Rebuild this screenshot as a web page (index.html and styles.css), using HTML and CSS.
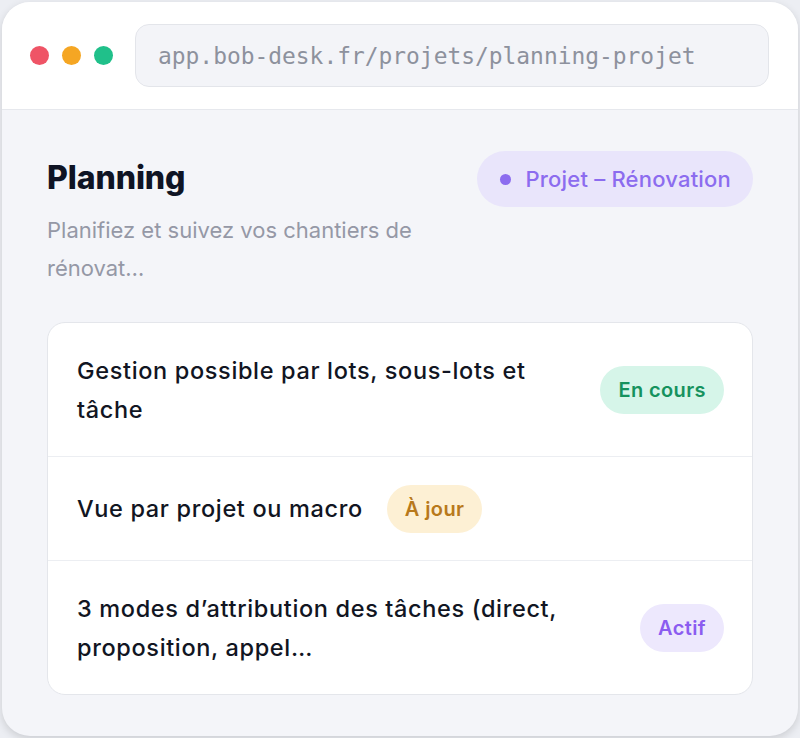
FILE: index.html
```html
<!DOCTYPE html>
<html lang="fr">
<head>
<meta charset="utf-8">
<title>Planning</title>
<link rel="stylesheet" href="styles.css">
</head>
<body>
<div class="window">
  <header class="titlebar">
    <div class="dots">
      <span class="dot dot-red"></span>
      <span class="dot dot-orange"></span>
      <span class="dot dot-green"></span>
    </div>
    <div class="url">app.bob-desk.fr/projets/planning-projet</div>
  </header>
  <main class="content">
    <div class="head">
      <div class="head-text">
        <h1 class="title">Planning</h1>
        <p class="subtitle">Planifiez et suivez vos chantiers de rénovat…</p>
      </div>
      <span class="tag"><span class="tag-dot"></span>Projet – Rénovation</span>
    </div>
    <div class="card">
      <div class="row">
        <span class="row-text">Gestion possible par lots, sous-lots et tâche</span>
        <span class="badge badge-green">En cours</span>
      </div>
      <div class="row">
        <span class="row-text">Vue par projet ou macro</span>
        <span class="badge badge-amber">À jour</span>
      </div>
      <div class="row">
        <span class="row-text">3 modes d’attribution des tâches (direct, proposition, appel…</span>
        <span class="badge badge-violet">Actif</span>
      </div>
    </div>
  </main>
</div>
</body>
</html>
```

FILE: styles.css
```css
* { box-sizing: border-box; }
html, body { margin: 0; padding: 0; }
body {
  background: #eceef3;
  font-family: "Inter", "Noto Sans", sans-serif;
  width: 800px;
  height: 738px;
  overflow: hidden;
}
.window {
  margin: 2px 2px 0 2px;
  height: 734px;
  border-radius: 28px;
  background: #f4f5f9;
  overflow: hidden;
  box-shadow: 0 3px 8px rgba(0, 0, 0, 0.14);
  display: flex;
  flex-direction: column;
}
.titlebar {
  background: #ffffff;
  height: 108px;
  border-bottom: 1px solid #e6e8ed;
  display: flex;
  align-items: center;
  padding: 0 29px 0 28px;
  gap: 22px;
  flex-shrink: 0;
}
.dots { display: flex; gap: 13px; }
.dot { width: 19px; height: 19px; border-radius: 50%; display: block; }
.dot-red { background: #ef5466; }
.dot-orange { background: #f5a623; }
.dot-green { background: #20c08a; }
.url {
  flex: 1;
  height: 63px;
  background: #f3f4f8;
  border: 1.5px solid #e3e5ea;
  border-radius: 14px;
  display: flex;
  align-items: center;
  padding-left: 22px;
  font-family: "DejaVu Sans Mono", "Liberation Mono", monospace;
  font-size: 22.9px;
  color: #8d919d;
}
.content {
  padding: 41px 45px 0 45px;
}
.head {
  display: flex;
  justify-content: space-between;
  align-items: flex-start;
}
.head-text { width: 400px; padding-top: 5px; }
.title {
  margin: 0;
  font-size: 32px;
  font-weight: 800;
  color: #0f1424;
  letter-spacing: -0.1px;
  line-height: 44px;
}
.subtitle {
  margin: 11px 0 0;
  font-size: 22px;
  line-height: 38px;
  color: #9598a6;
  letter-spacing: 0;
}
.tag {
  display: inline-flex;
  align-items: center;
  gap: 14px;
  height: 56px;
  padding: 0 22px 0 23px;
  border-radius: 28px;
  background: #e9e5fb;
  color: #8c6cef;
  font-size: 22px;
  font-weight: 500;
  letter-spacing: 0.2px;
}
.tag-dot { width: 11px; height: 11px; border-radius: 50%; background: #8c6cef; }
.card {
  margin-top: 35px;
  background: #ffffff;
  border: 1.5px solid #e4e6eb;
  border-radius: 18px;
  overflow: hidden;
}
.row {
  display: flex;
  align-items: center;
  gap: 24px;
  padding: 27.5px 28px 27.5px 29px;
  border-bottom: 1px solid #eceef2;
}
.row:last-child { border-bottom: none; padding-bottom: 27px; }
.row-text {
  font-size: 23.5px;
  font-weight: 500;
  line-height: 39px;
  color: #111522;
  letter-spacing: 0.65px;
}
.row:first-child .row-text, .row:last-child .row-text { flex: 1; }
.badge {
  flex-shrink: 0;
  height: 48px;
  display: inline-flex;
  align-items: center;
  padding: 0 18px;
  border-radius: 24px;
  font-size: 20px;
  font-weight: 600;
  letter-spacing: 0.4px;
}
.badge-green { background: #d6f5e9; color: #16925e; }
.badge-amber { background: #fdf0d4; color: #b8791b; }
.badge-violet { background: #ede8fd; color: #8b5cf0; }
```
